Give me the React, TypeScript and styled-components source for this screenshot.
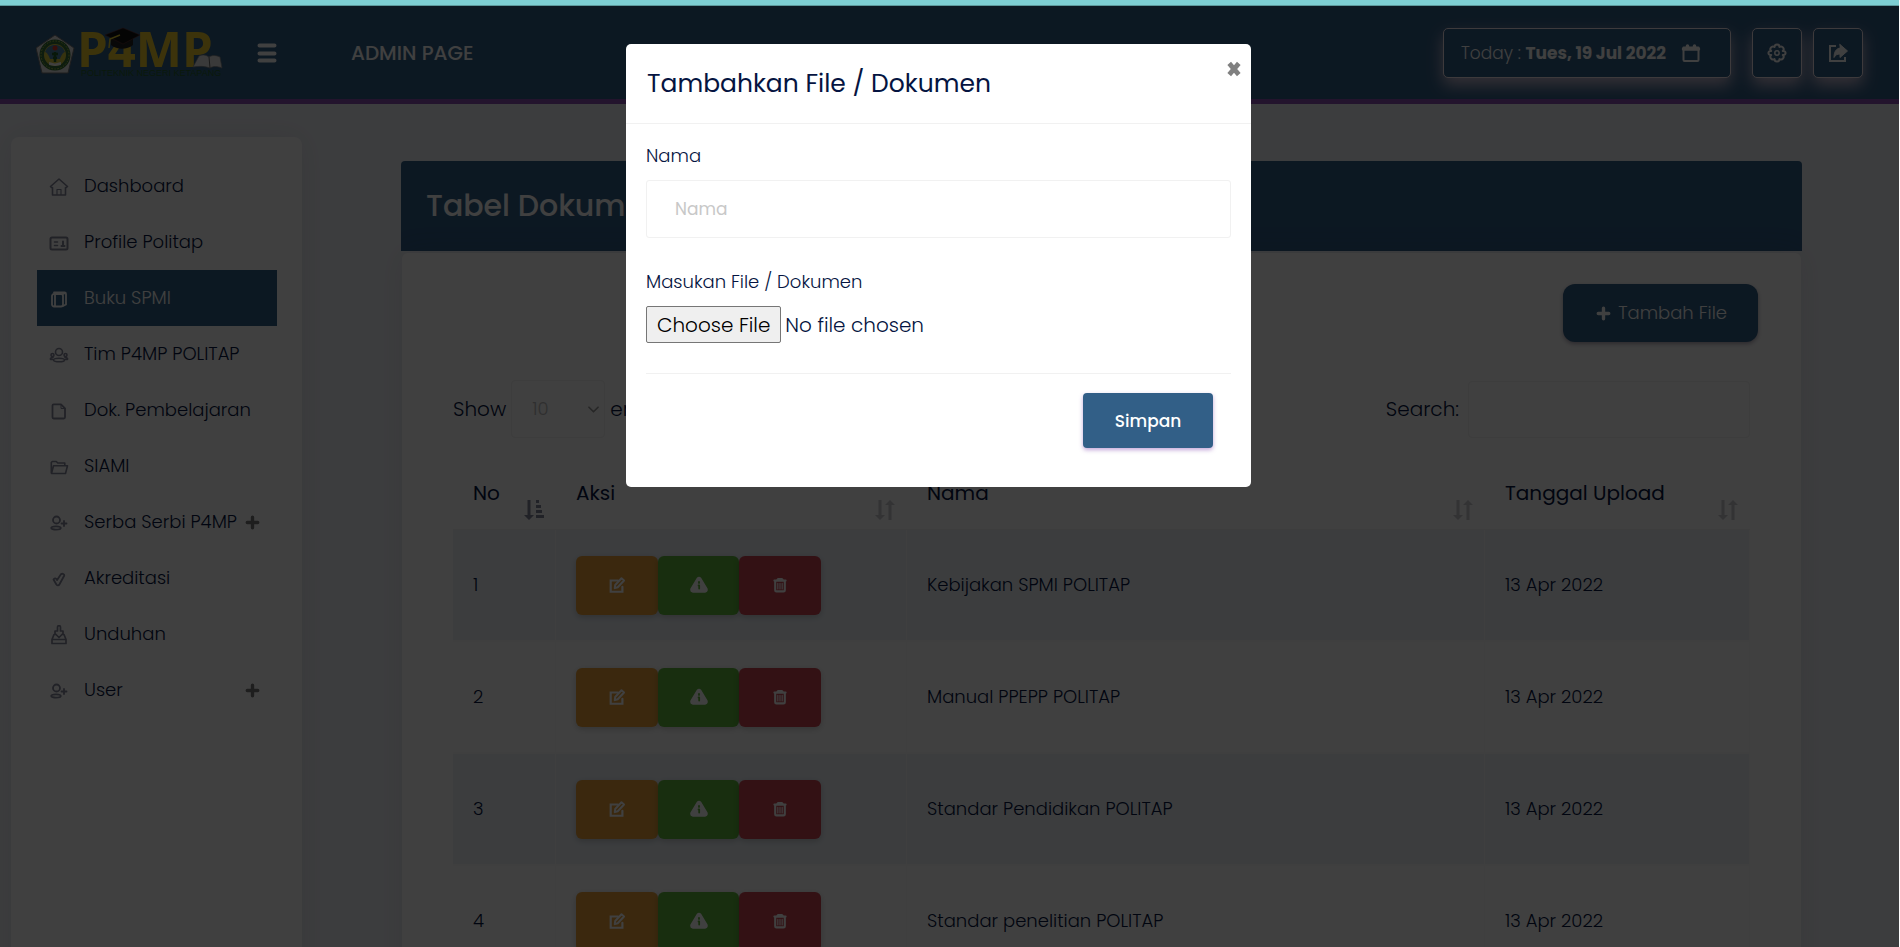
import React from "react";
import styled, { createGlobalStyle } from "styled-components";

const BLUE = "#325f87";
const INK = "#051441";

const GlobalStyle = createGlobalStyle`
  *, *::before, *::after { box-sizing: border-box; }
  html { background: #fff; }
  body {
    margin: 0;
    color: ${INK};
    font-family: Poppins, Inter, "Open Sans", sans-serif;
    font-size: 18px;
    font-weight: 300;
    line-height: 24px;
  }
  button, input, select { font: inherit; }
`;

const Shell = styled.div`
  height: 100vh;
  overflow: hidden;
  margin-right: 1px;
  background: #f0f3f7;
`;
const TopStrip = styled.div`
  height: 6px;
  background: #7ecfd3;
  border-bottom: 1px solid #5d999c;
`;
const Header = styled.header`
  display: flex;
  align-items: center;
  height: 98px;
  padding: 0 36px;
  background: ${BLUE};
  border-bottom: 5px solid #8a50b4;
  color: #fff;
`;
const PlainButton = styled.button`
  display: flex;
  padding: 0;
  border: 0;
  background: none;
  color: inherit;
  cursor: pointer;
`;
const MenuButton = styled(PlainButton)`
  margin-left: 34px;
`;
const PageName = styled.span`
  flex: 1;
  margin-left: 74px;
  font-size: 20px;
  font-weight: 500;
`;
const HeaderTools = styled.div`
  display: flex;
  gap: 11px;
`;
const ToolButton = styled.button<{ $wide?: boolean }>`
  display: flex;
  align-items: center;
  justify-content: ${(p) => (p.$wide ? "space-between" : "center")};
  width: ${(p) => (p.$wide ? "288px" : "50px")};
  height: 50px;
  margin-right: ${(p) => (p.$wide ? "10px" : "0")};
  padding: ${(p) => (p.$wide ? "0 29px 0 17px" : "0")};
  border: 1px solid #f3e8f0;
  border-radius: 5px;
  background: ${BLUE};
  box-shadow: 0 7px 16px rgba(248, 215, 233, 0.8);
  color: #fff;
  font-size: 17px;
  cursor: pointer;
  b { font-weight: 700; }
`;

const Body = styled.div`
  display: flex;
  align-items: flex-start;
`;
const Sidebar = styled.nav`
  width: 291px;
  min-height: 100vh;
  margin: 33px 0 0 11px;
  padding: 21px 25px 20px 26px;
  border-radius: 8px;
  background: #fff;
  box-shadow: 0 0 30px rgba(82, 63, 105, 0.1);
`;
const MenuList = styled.ul`
  margin: 0;
  padding: 0;
  list-style: none;
`;
const MenuLink = styled.a<{ $active?: boolean }>`
  display: flex;
  align-items: center;
  height: 56px;
  padding: 0 17px 0 12px;
  background: ${(p) => (p.$active ? BLUE : "transparent")};
  color: ${(p) => (p.$active ? "#fff" : INK)};
  text-decoration: none;
  white-space: nowrap;
  svg:first-child {
    flex: none;
    margin: 2px 15px 0 0;
    color: ${(p) => (p.$active ? "#fff" : "#85869a")};
  }
  svg:last-child { flex: none; margin-left: auto; color: #777; }
`;

const Main = styled.main`
  flex: 1;
  min-width: 0;
  padding: 57px 97px 0 99px;
`;
const CardTitle = styled.h4`
  margin: 0;
  padding: 25px;
  border-radius: 4px 4px 0 0;
  background: ${BLUE};
  color: #fff;
  font-size: 30px;
  font-weight: 500;
  line-height: 40px;
`;
const CardBody = styled.section`
  min-height: 100vh;
  margin: 2px 1px 0;
  padding: 31px 51px 0;
  border-radius: 6px;
  background: #fff;
  box-shadow: 0 0 30px rgba(82, 63, 105, 0.1);
`;
const AddRow = styled.div`
  display: flex;
  justify-content: flex-end;
  margin: 0 -8px 38px 0;
`;
const AddButton = styled.button`
  display: flex;
  align-items: center;
  gap: 7px;
  height: 58px;
  padding: 0 31px 0 33px;
  border: 0;
  border-radius: 12px;
  background: ${BLUE};
  box-shadow: 0 2px 4px rgba(50, 30, 70, 0.4);
  color: #fff;
  cursor: pointer;
`;
const Controls = styled.div`
  display: flex;
  justify-content: space-between;
  font-size: 20px;
`;
const ControlLabel = styled.label`
  display: flex;
  align-items: center;
  gap: 5px;
`;
const SelectBox = styled.span`
  position: relative;
  svg { position: absolute; right: 5px; top: 23px; color: #999; }
`;
const LengthSelect = styled.select`
  width: 94px;
  height: 58px;
  padding: 0 20px;
  appearance: none;
  border: 1px solid #f1f1f1;
  border-radius: 4px;
  background: #fff;
  color: #bbb;
  font-size: 18px;
`;
const SearchInput = styled.input`
  width: 282px;
  height: 57px;
  margin-left: 4px;
  border: 1px solid #f1f1f1;
  border-radius: 4px;
  background: #fff;
`;

const Table = styled.table`
  width: 100%;
  margin-top: 36px;
  border-collapse: separate;
  border-spacing: 0;
  table-layout: fixed;
`;
const HeadCell = styled.th<{ $width?: string }>`
  width: ${(p) => p.$width ?? "auto"};
  height: 56px;
  padding: 0 12px 0 20px;
  border-bottom: 1px solid #f1f1f1;
  font-size: 20px;
  font-weight: 400;
  text-align: left;
  vertical-align: top;
`;
const HeadInner = styled.div`
  display: flex;
  align-items: flex-end;
  justify-content: space-between;
  height: 46px;
  span { align-self: flex-start; padding-top: 7px; }
`;
const Row = styled.tr<{ $odd: boolean }>`
  td { background: ${(p) => (p.$odd ? "#eef3f8" : "#fff")}; }
`;
const Cell = styled.td`
  height: 112px;
  padding: 0 20px;
  border-bottom: 2px solid #f9f9f9;
  border-right: 1px solid #fafafa;
`;
const Actions = styled.div`
  display: flex;
  width: 245px;
`;
const ActionButton = styled.button<{ $tone: string }>`
  display: flex;
  flex: 1;
  align-items: center;
  justify-content: center;
  height: 59px;
  padding: 0;
  border: 0;
  border-radius: 6px;
  background: ${(p) => p.$tone};
  box-shadow: 0 2px 6px rgba(0, 0, 0, 0.2);
  color: #fff;
  cursor: pointer;
`;

const Backdrop = styled.div`
  position: fixed;
  inset: 6px 1px 0 0;
  display: flex;
  align-items: flex-start;
  justify-content: center;
  padding: 38px 22px 0 0;
  background: rgba(0, 0, 0, 0.75);
`;
const Modal = styled.div`
  position: relative;
  width: 625px;
  border-radius: 5px;
  background: #fff;
`;
const ModalTitle = styled.h5`
  margin: 0;
  padding: 24px 21px 23px;
  border-bottom: 1px solid #f1f1f1;
  font-size: 25px;
  font-weight: 400;
  line-height: 32px;
`;
const CloseButton = styled(PlainButton)`
  position: absolute;
  top: 17px;
  right: 9px;
  color: #808080;
`;
const Form = styled.form`
  padding: 20px 20px 39px;
`;
const FieldLabel = styled.label`
  display: block;
  margin-bottom: 12px;
`;
const TextInput = styled.input`
  display: block;
  width: 100%;
  height: 58px;
  margin-bottom: 32px;
  padding: 0 28px;
  border: 1px solid #f1f1f1;
  border-radius: 3px;
  color: ${INK};
  font-size: 17px;
  font-weight: 400;
  &::placeholder { color: #c8c8c8; opacity: 1; }
`;
const FileInput = styled.input`
  display: block;
  width: 100%;
  height: 37px;
  font-size: 20px;
  line-height: 30px;
  &::file-selector-button {
    height: 37px;
    padding: 1px 10px;
    border: 1px solid #767676;
    border-radius: 2px;
    background: #efefef;
    color: #000;
    font: inherit;
  }
`;
const FormFooter = styled.div`
  display: flex;
  justify-content: flex-end;
  margin-top: 30px;
  padding: 19px 18px 0;
  border-top: 1px solid #f1f1f1;
`;
const SaveButton = styled.button`
  width: 130px;
  height: 55px;
  border: 0;
  border-radius: 4px;
  background: ${BLUE};
  box-shadow: 0 2px 4px rgba(138, 80, 180, 0.5);
  color: #fff;
  font-size: 17px;
  font-weight: 500;
  cursor: pointer;
`;

type IconProps = { size?: number; children: React.ReactNode; width?: number };
const Icon = ({ size = 20, width = 2, children }: IconProps) => (
  <svg width={size} height={size} viewBox="0 0 20 20" fill="none" stroke="currentColor" strokeWidth={width} strokeLinejoin="round" strokeLinecap="round" aria-hidden="true">
    {children}
  </svg>
);
const HomeIcon = () => <Icon width={1.6}><path d="M1.500 9.500 10 2l8.500 7.500-1.200 1H16.500v7.500h-13v-7.500H2.500Z" /><path d="M8 17.500v-5h4v5" strokeWidth="1.200" /></Icon>;
const IdIcon = () => <Icon width={2}><rect x="1.500" y="4.500" width="17" height="12" rx="1.500" /><path d="M5.500 9h3M5.500 12.500h3" strokeWidth="1.600" /><path d="M12.500 13h3M14 8.500v3" strokeWidth="2" /></Icon>;
const BookIcon = () => <Icon width={1.800}><rect x="3" y="5" width="11" height="12.500" rx="2" /><path d="M5 3.500h10.500a1.500 1.500 0 0 1 1.500 1.500v10.500l-3 1.500M6 5v12M14 5l2.500-1" /></Icon>;
const TeamIcon = () => <Icon width={1.6}><circle cx="10" cy="7" r="3.500" /><ellipse cx="10" cy="15" rx="5.500" ry="1.800" /><circle cx="3.500" cy="10" r="1.500" /><circle cx="16.500" cy="10" r="1.500" /><path d="M4 12.500c-2 .2-3 .8-2.500 2h2M16 12.500c2 .2 3 .8 2.500 2h-2" /></Icon>;
const DocIcon = () => <Icon width={1.8}><path d="M3.500 4.500a1.200 1.200 0 0 1 1.200-1.200H12l4 4v9a1.200 1.200 0 0 1-1.200 1.200H4.700a1.200 1.200 0 0 1-1.200-1.200Z" /><path d="M12 3.500v4h4" strokeWidth="1" /></Icon>;
const FolderIcon = () => <Icon width={1.6}><path d="M2.300 16V5.500l1-1h4l1.500 1.500h7V8.500M2.500 16.500 4.500 8.800h14L16.500 16.500Z" /></Icon>;
const UserAddIcon = () => <Icon width={1.8}><circle cx="7.500" cy="7" r="3.500" /><ellipse cx="7" cy="15" rx="4.800" ry="1.600" /><path d="M12.500 10.500h5M15 8v5" /></Icon>;
const CheckIcon = () => <Icon width={1.8}><path d="M4.500 10.500c1-1.800 2.600-1.300 3.600.6l4-6c1.500-.8 3.400 0 3.200 1.400l-4.800 8.800c-.9 1.500-2.200 1.300-3.100.2Z" /></Icon>;
const DownloadIcon = () => <Icon width={1.7}><path d="M8.500 6V2.200a1.500 1.500 0 0 1 3 0V6h2.500v2.500l-4 4-4-4V6ZM6 9.500H5l-2 5v4h14v-4l-2-5h-1M3 14.500h14" /></Icon>;
const PlusIcon = () => <Icon size={15} width={4.500}><path d="M10 3v14M3 10h14" /></Icon>;
const CloseIcon = () => <Icon size={16} width={6}><path d="m4 3 12 14M16 3 4 17" strokeLinecap="butt" /></Icon>;
const BarsIcon = () => <Icon width={4}><path d="M2.500 2.500h15M2.500 10.500h15M2.500 17.500h15" /></Icon>;
const CalendarIcon = () => <Icon width={2}><path d="M2.500 4.500h15v12.500a1 1 0 0 1-1 1h-13a1 1 0 0 1-1-1Z" /><path d="M2.500 6h15M6.500 3v3M13.500 3v3" strokeWidth="3.500" /></Icon>;
const GearIcon = () => (
  <Icon width={2}>
    <path d="M7.500 4C7.500 .6 12.500 .6 12.500 4 15.500 2.300 18 6 15.800 8 19.500 7.800 19.500 12.200 15.800 12 18 14 15.500 17.700 12.500 16 12.500 19.400 7.500 19.400 7.500 16 4.500 17.700 2 14 4.200 12 .5 12.200 .5 7.800 4.200 8 2 6 4.500 2.300 7.500 4Z" />
    <circle cx="10" cy="10" r="2.200" strokeWidth="1.500" />
  </Icon>
);
const ShareIcon = () => (
  <Icon width={2}>
    <path d="M8 3H2v15h15v-4" strokeLinejoin="miter" strokeLinecap="butt" />
    <path d="M12 1.500 19.500 8 12 14.500V11C9 11 7.500 12 6 14.500 6 9 8 5.500 12 5Z" fill="currentColor" strokeWidth="1" />
  </Icon>
);
const EditIcon = () => <Icon size={18} width={2.4}><path d="M11 5H3v12.500h13V12" strokeLinejoin="miter" /><path d="M7.500 13.500 8 10l7-7.500 2.800 2.500-7 7.500Z" strokeWidth="2.200" /></Icon>;
const WarnIcon = () => (
  <Icon size={18} width={2}>
    <path d="M8.500 2.500c.8-1 2.200-1 3 0L18.500 14c.6 1.800 0 3-1.500 3.500H3C1.500 17 .9 15.800 1.500 14Z" fill="currentColor" />
    <path d="M10 6.500v1.200M9.500 10.500h.7V14" stroke="#5fb83c" />
  </Icon>
);
const TrashIcon = () => <Icon size={16} width={2.600}><path d="M3 4.500h14M6.500 4 7.500 2.500h5l1 1.500M4 5.500v11a1.500 1.500 0 0 0 1.500 1.500h9a1.500 1.500 0 0 0 1.500-1.500v-11" /><path d="M7.300 8v7M10 8v7M12.700 8v7" strokeWidth="1.400" /></Icon>;
const ChevronIcon = () => <Icon size={13} width={2.600}><path d="m3 6.500 7 7 7-7" /></Icon>;
const SortIcon = ({ active }: { active?: boolean }) => (
  <svg width="20" height="20" viewBox="0 0 20 20" fill={active ? "#85869a" : "#c9c9d0"} aria-hidden="true">
    <path d="M3.500 0h3v15H10l-5 5-5-5h3.500Z" />
    {active ? <path d="M12 0h3v3h-3ZM12 5h5v3h-5ZM12 10h6v3h-6ZM12 15h8v3h-8Z" /> : <path d="M13.500 20h3V5H20l-5-5-5 5h3.500Z" />}
  </svg>
);

const Logo = () => (
  <svg width="187" height="74" viewBox="0 -12 187 74" role="img" aria-label="P4MP Politeknik Negeri Ketapang">
    <path d="M19 7 38 20 32 45H6L0 20Z" fill="#e8e8e8" stroke="#777" />
    <circle cx="19" cy="27" r="15.500" fill="#356f38" />
    <circle cx="19" cy="27" r="14" fill="none" stroke="#b5c84a" strokeDasharray="1.500 1.500" />
    <circle cx="19" cy="27" r="11" fill="#d8c93f" />
    <path d="M9 24c2-5 5-7 10-7s8 2 10 7c-2 0-4 4-5 7H14c-1-3-3-7-5-7Z" fill="#4d83a9" />
    <circle cx="19" cy="20" r="2.500" fill="#d83a2a" />
    <path d="M19 24v10M16 26h6M17 30h4" stroke="#22622a" strokeWidth="2.500" />
    <path d="m13 34 6 1.500L25 34v3l-6 1-6-1Z" fill="#fff" />
    <text x="41" y="39" fill="#f0cc2e" fontFamily="Open Sans, sans-serif" fontWeight="700" fontSize="49">P4MP</text>
    <text x="45" y="48" fill="#27612b" fontFamily="Liberation Sans, sans-serif" fontSize="9">POLITEKNIK NEGERI KETAPANG</text>
    <path d="M75 11v6c6 5 16 5 22 0v-6Z" fill="#222" />
    <path d="m87 0 17 7-17 9-18-9Z" fill="#111" stroke="#7a3434" strokeWidth=".5" />
    <path d="m84 7-10 4-1 9" fill="none" stroke="#e8d030" strokeWidth="1.500" />
    <path d="m157 39 6-11c4-2 7-1 10 1 3-2 7-2 11 0l2 11c-5-2-9-2-12 0-5-2-11-2-17-1Z" fill="#e6e6e6" stroke="#888" strokeWidth=".7" />
    <path d="m173 29 1 11" stroke="#666" />
  </svg>
);

const menu = [
  { label: "Dashboard", icon: <HomeIcon /> },
  { label: "Profile Politap", icon: <IdIcon /> },
  { label: "Buku SPMI", icon: <BookIcon />, active: true },
  { label: "Tim P4MP POLITAP", icon: <TeamIcon /> },
  { label: "Dok. Pembelajaran", icon: <DocIcon /> },
  { label: "SIAMI", icon: <FolderIcon /> },
  { label: "Serba Serbi P4MP", icon: <UserAddIcon />, more: true },
  { label: "Akreditasi", icon: <CheckIcon /> },
  { label: "Unduhan", icon: <DownloadIcon /> },
  { label: "User", icon: <UserAddIcon />, more: true },
];
const files = ["Kebijakan SPMI POLITAP", "Manual PPEPP POLITAP", "Standar Pendidikan POLITAP", "Standar penelitian POLITAP"];
const columns = [
  { name: "No", width: "103px" },
  { name: "Aksi", width: "351px" },
  { name: "Nama" },
  { name: "Tanggal Upload", width: "265px" },
];

export default function App() {
  return (
    <>
      <GlobalStyle />
      <Shell>
        <TopStrip />
        <Header>
          <Logo />
          <MenuButton aria-label="Menu"><BarsIcon /></MenuButton>
          <PageName>ADMIN PAGE</PageName>
          <HeaderTools>
            <ToolButton $wide><span>Today : <b>Tues, 19 Jul 2022</b></span><CalendarIcon /></ToolButton>
            <ToolButton aria-label="Settings"><GearIcon /></ToolButton>
            <ToolButton aria-label="Log out"><ShareIcon /></ToolButton>
          </HeaderTools>
        </Header>
        <Body>
          <Sidebar>
            <MenuList>
              {menu.map((m) => (
                <li key={m.label}>
                  <MenuLink href="#" $active={m.active}>
                    {m.icon}
                    <span>{m.label}</span>
                    {m.more && <PlusIcon />}
                  </MenuLink>
                </li>
              ))}
            </MenuList>
          </Sidebar>
          <Main>
            <CardTitle>Tabel Dokumen</CardTitle>
            <CardBody>
              <AddRow>
                <AddButton><PlusIcon />Tambah File</AddButton>
              </AddRow>
              <Controls>
                <ControlLabel>
                  Show
                  <SelectBox>
                    <LengthSelect defaultValue="10"><option>10</option><option>25</option></LengthSelect>
                    <ChevronIcon />
                  </SelectBox>
                  entries
                </ControlLabel>
                <ControlLabel>Search:<SearchInput type="search" /></ControlLabel>
              </Controls>
              <Table>
                <thead>
                  <tr>
                    {columns.map((c, i) => (
                      <HeadCell key={c.name} $width={c.width}>
                        <HeadInner><span>{c.name}</span><SortIcon active={i === 0} /></HeadInner>
                      </HeadCell>
                    ))}
                  </tr>
                </thead>
                <tbody>
                  {files.map((name, i) => (
                    <Row key={name} $odd={i % 2 === 0}>
                      <Cell>{i + 1}</Cell>
                      <Cell>
                        <Actions>
                          <ActionButton $tone="#e9a13a" aria-label="Edit"><EditIcon /></ActionButton>
                          <ActionButton $tone="#5fb83c" aria-label="Info"><WarnIcon /></ActionButton>
                          <ActionButton $tone="#cb4450" aria-label="Delete"><TrashIcon /></ActionButton>
                        </Actions>
                      </Cell>
                      <Cell>{name}</Cell>
                      <Cell>13 Apr 2022</Cell>
                    </Row>
                  ))}
                </tbody>
              </Table>
            </CardBody>
          </Main>
        </Body>
      </Shell>
      <Backdrop>
        <Modal role="dialog" aria-modal="true" aria-labelledby="dialog-title">
          <ModalTitle id="dialog-title">Tambahkan File / Dokumen</ModalTitle>
          <CloseButton aria-label="Close"><CloseIcon /></CloseButton>
          <Form onSubmit={(e) => e.preventDefault()}>
            <FieldLabel htmlFor="nama">Nama</FieldLabel>
            <TextInput id="nama" placeholder="Nama" />
            <FieldLabel htmlFor="dokumen">Masukan File / Dokumen</FieldLabel>
            <FileInput id="dokumen" type="file" />
            <FormFooter><SaveButton>Simpan</SaveButton></FormFooter>
          </Form>
        </Modal>
      </Backdrop>
    </>
  );
}
